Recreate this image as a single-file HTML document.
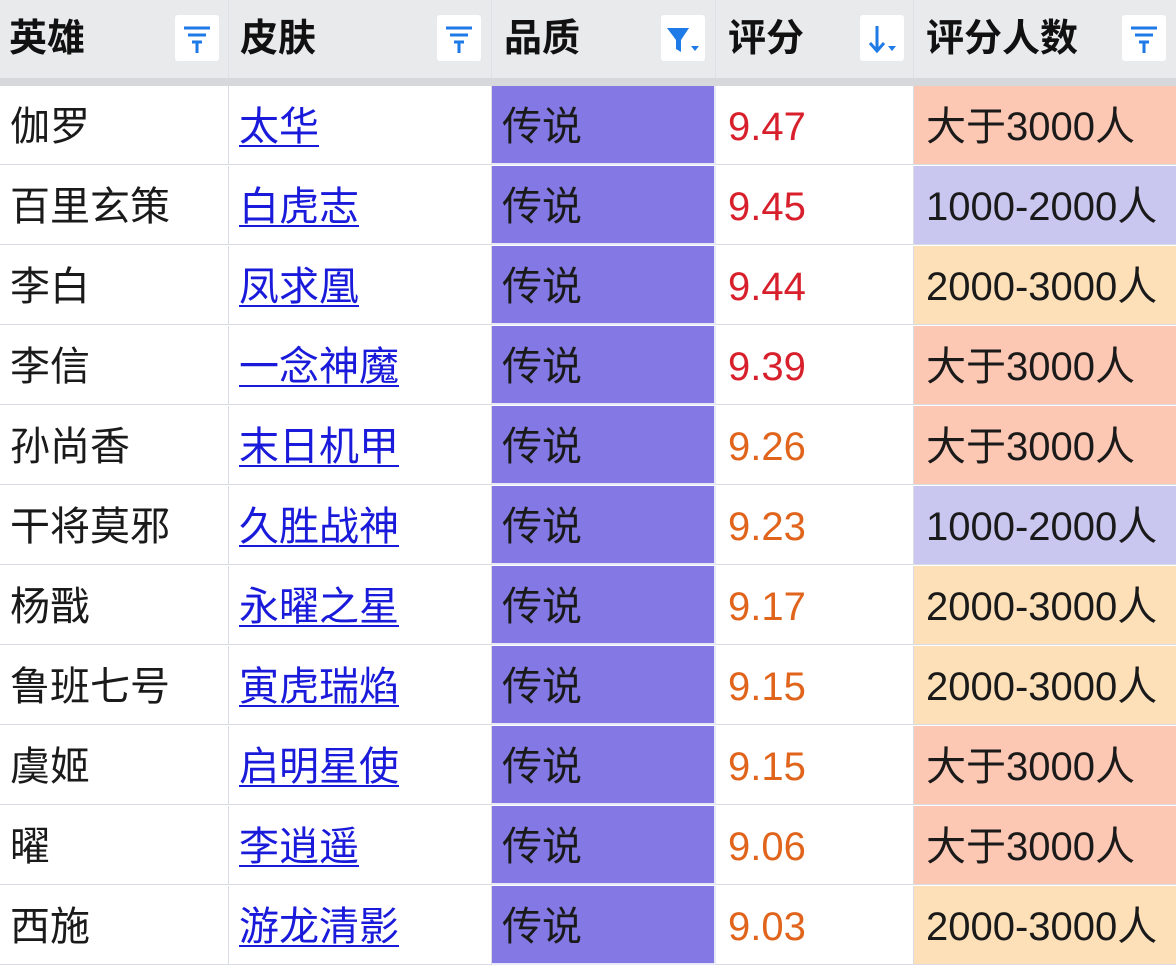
<!DOCTYPE html>
<html><head><meta charset="utf-8"><style>
body{margin:0;width:1176px;height:966px;overflow:hidden;background:#fff;font-family:"Liberation Sans","Noto Sans CJK SC",sans-serif;}
.hd{position:absolute;left:0;top:0;width:1176px;height:78px;background:#e9eaec;}
.band{position:absolute;left:0;top:78px;width:1176px;height:8px;background:#d6d8dc;}
.h{position:absolute;top:0;height:78px;line-height:78px;font-size:38px;font-weight:bold;color:#111;padding-left:9px;box-sizing:border-box;border-right:1px solid #dfe0e3;}
.ic{position:absolute;top:15px;width:44px;height:46px;background:#fff;border-radius:3px;}
.row{position:absolute;left:0;width:1176px;height:80px;}
.c{position:absolute;top:0;height:79px;line-height:82px;font-size:40px;color:#1a1a1a;padding-left:10px;box-sizing:border-box;white-space:nowrap;border-bottom:1px solid #d9dce3;border-right:1px solid #d9dce3;}
.c1{left:0;width:229px}.c2{left:229px;width:263px}.c3{left:492px;width:224px}.c4{left:716px;width:198px;padding-left:12px}.c5{left:914px;width:262px;border-right:0;padding-left:12px}
.c2 a{color:#1a1adb;text-decoration:underline;text-decoration-thickness:2px;text-underline-offset:5px;}
.c3{background:#8479e4;border-right:2px solid #e8e9f8;border-bottom:2px solid #e8e9f8}
.r{color:#d8202c}.o{color:#e0641c}
.A{background:#fcc8b4}.B{background:#c9c6f0}.C{background:#fde0b8}
</style></head><body>
<div class="hd"></div><div class="band"></div>
<div class="h" style="left:0;width:229px">英雄</div>
<div class="h" style="left:229px;width:263px;padding-left:11px">皮肤</div>
<div class="h" style="left:492px;width:224px;padding-left:12px">品质</div>
<div class="h" style="left:716px;width:198px;padding-left:12px">评分</div>
<div class="h" style="left:914px;width:262px;padding-left:12px;border:0">评分人数</div>
<div class="ic" style="left:175px"><svg width="44" height="46"><path d="M9 13H35M13 20H31M17 27H27M22 27V38" stroke="#1e7ae6" stroke-width="3"/></svg></div>
<div class="ic" style="left:437px"><svg width="44" height="46"><path d="M9 13H35M13 20H31M17 27H27M22 27V38" stroke="#1e7ae6" stroke-width="3"/></svg></div>
<div class="ic" style="left:661px"><svg width="44" height="46"><path d="M6 13H28L20 25V37L15 34V25Z" fill="#1e7ae6"/><path d="M30 31H38L34 36Z" fill="#1e7ae6"/></svg></div>
<div class="ic" style="left:860px"><svg width="44" height="46"><path d="M17 11V35M10 28L17 36L24 28" stroke="#1e7ae6" stroke-width="3" fill="none"/><path d="M28 31H36L32 36Z" fill="#1e7ae6"/></svg></div>
<div class="ic" style="left:1122px"><svg width="44" height="46"><path d="M9 13H35M13 20H31M17 27H27M22 27V38" stroke="#1e7ae6" stroke-width="3"/></svg></div>

<div class="row" style="top:86px"><div class="c c1">伽罗</div><div class="c c2"><a>太华</a></div><div class="c c3">传说</div><div class="c c4 r">9.47</div><div class="c c5 A">大于3000人</div></div>
<div class="row" style="top:166px"><div class="c c1">百里玄策</div><div class="c c2"><a>白虎志</a></div><div class="c c3">传说</div><div class="c c4 r">9.45</div><div class="c c5 B">1000-2000人</div></div>
<div class="row" style="top:246px"><div class="c c1">李白</div><div class="c c2"><a>凤求凰</a></div><div class="c c3">传说</div><div class="c c4 r">9.44</div><div class="c c5 C">2000-3000人</div></div>
<div class="row" style="top:326px"><div class="c c1">李信</div><div class="c c2"><a>一念神魔</a></div><div class="c c3">传说</div><div class="c c4 r">9.39</div><div class="c c5 A">大于3000人</div></div>
<div class="row" style="top:406px"><div class="c c1">孙尚香</div><div class="c c2"><a>末日机甲</a></div><div class="c c3">传说</div><div class="c c4 o">9.26</div><div class="c c5 A">大于3000人</div></div>
<div class="row" style="top:486px"><div class="c c1">干将莫邪</div><div class="c c2"><a>久胜战神</a></div><div class="c c3">传说</div><div class="c c4 o">9.23</div><div class="c c5 B">1000-2000人</div></div>
<div class="row" style="top:566px"><div class="c c1">杨戬</div><div class="c c2"><a>永曜之星</a></div><div class="c c3">传说</div><div class="c c4 o">9.17</div><div class="c c5 C">2000-3000人</div></div>
<div class="row" style="top:646px"><div class="c c1">鲁班七号</div><div class="c c2"><a>寅虎瑞焰</a></div><div class="c c3">传说</div><div class="c c4 o">9.15</div><div class="c c5 C">2000-3000人</div></div>
<div class="row" style="top:726px"><div class="c c1">虞姬</div><div class="c c2"><a>启明星使</a></div><div class="c c3">传说</div><div class="c c4 o">9.15</div><div class="c c5 A">大于3000人</div></div>
<div class="row" style="top:806px"><div class="c c1">曜</div><div class="c c2"><a>李逍遥</a></div><div class="c c3">传说</div><div class="c c4 o">9.06</div><div class="c c5 A">大于3000人</div></div>
<div class="row" style="top:886px"><div class="c c1">西施</div><div class="c c2"><a>游龙清影</a></div><div class="c c3">传说</div><div class="c c4 o">9.03</div><div class="c c5 C">2000-3000人</div></div>
</body></html>
